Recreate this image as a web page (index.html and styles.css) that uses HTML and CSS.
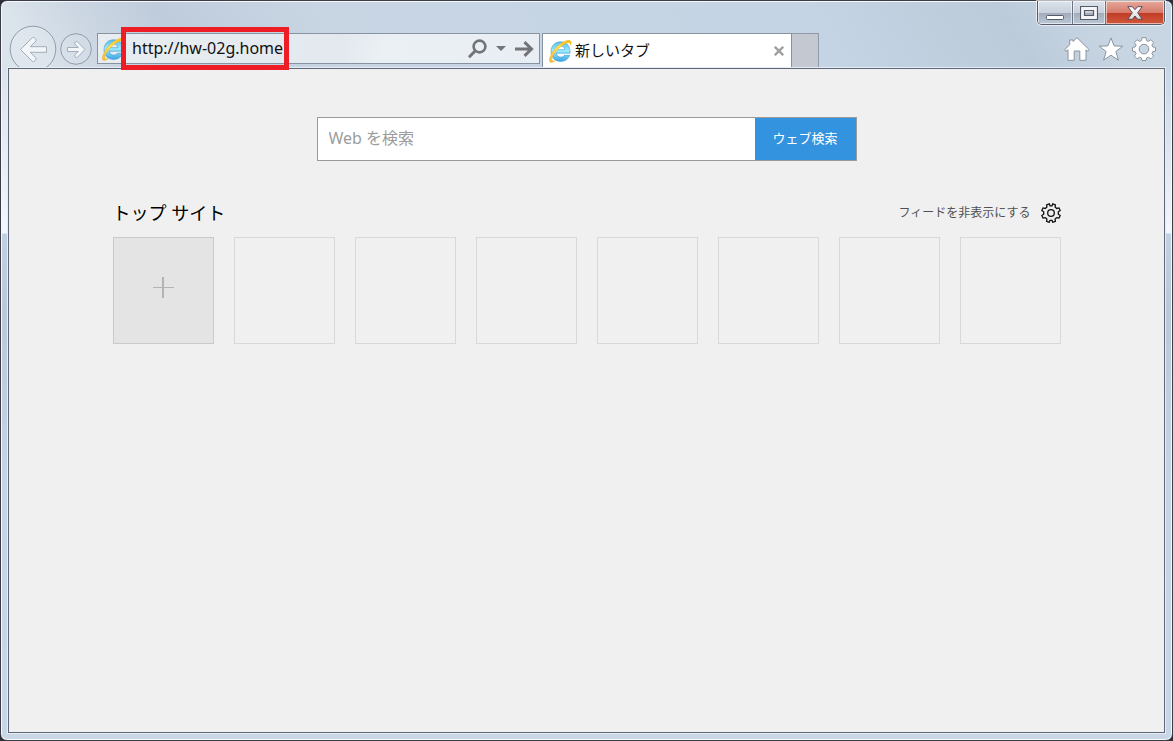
FILE: index.html
```html
<!DOCTYPE html>
<html lang="ja">
<head>
<meta charset="utf-8">
<meta name="viewport" content="width=device-width, initial-scale=1">
<title>新しいタブ</title>
<link rel="stylesheet" href="styles.css">
</head>
<body>
<svg class="defs" aria-hidden="true">
  <defs>
    <linearGradient id="ie-blue" x1="0" y1="0" x2="0" y2="1">
      <stop offset="0" stop-color="#5cbcec"/><stop offset=".45" stop-color="#9becff"/><stop offset="1" stop-color="#3aa4e2"/>
    </linearGradient>
    <linearGradient id="ie-gold" x1="0" y1="1" x2="1" y2="0">
      <stop offset="0" stop-color="#f7b73a"/><stop offset=".5" stop-color="#ffe04a"/><stop offset="1" stop-color="#f5bd14"/>
    </linearGradient>
    <linearGradient id="close-face" x1="0" y1="0" x2="0" y2="1">
      <stop offset="0" stop-color="#fff"/><stop offset="1" stop-color="#d8d8dc"/>
    </linearGradient>
    <symbol id="ie" viewBox="0 0 24 24">
      <path d="M12.600 2.800C6.800 2.800 3 7.100 3 12.700c0 5.700 4 9.700 9.700 9.700 4.300 0 7.700-2.300 9-6.100h-5.400c-.7 1.200-1.900 1.800-3.500 1.800-2.500 0-4.200-1.500-4.400-3.900h13.700C22.500 7.200 18.900 2.800 12.600 2.800zM8.500 10.700c.4-2.400 2-3.700 4.200-3.700s3.800 1.300 4.100 3.700z" fill="url(#ie-blue)" stroke="#3f9bd2" stroke-width=".6"/>
      <path d="M1.900 22.900C.3 20.500 3 13.600 8.700 8 14 2.800 20 .3 22.300 1.700c1.100.7 1.100 2.400.3 4.600-.1-1.600-.5-2.300-1.600-2.500-2.500-.5-7.300 2.500-11.200 6.500C5.800 14.400 3.100 19.200 3.900 21.100c.4.900 1.500 1.200 3.200.7-2.300 1.500-4.300 2.100-5.200 1.100z" fill="url(#ie-gold)" stroke="#f0b323" stroke-width=".5"/>
    </symbol>
  </defs>
</svg>

<div class="window">
  <div class="caption">
    <button class="caption-btn" aria-label="最小化">
      <svg width="18" height="6" viewBox="0 0 18 6"><rect x=".5" y=".5" width="17" height="4" rx="1" fill="#fff" stroke="#565a68"/></svg>
    </button>
    <button class="caption-btn" aria-label="最大化">
      <svg width="18" height="14" viewBox="0 0 18 14"><path d="M.5.5h17v13H.5zM4.500 4.500v5h9v-5z" fill="#f4f4f7" stroke="#565a68" stroke-width="1.200" fill-rule="evenodd"/></svg>
    </button>
    <button class="caption-btn caption-close" aria-label="閉じる">
      <svg width="16" height="14" viewBox="0 0 16 14"><path d="M.8.700h4.600L8 3.700l2.600-3h4.600L10.700 6.800l4.500 6.500h-4.600L8 10l-2.600 3.300H.8l4.500-6.500z" fill="url(#close-face)" stroke="#5a4a58"/></svg>
    </button>
  </div>

  <header class="toolbar">
    <button class="nav-btn back" aria-label="戻る">
      <svg width="48" height="48" viewBox="0 0 48 48"><circle cx="24" cy="24" r="22.800" fill="#ffffff22" stroke="#8f9cab"/><path d="M11.500 24.500 23.300 12.600c1.100-1.100 4.600 1.500 3.500 3.600L21.200 21.700H37.500v5.600H21.200l5.600 5.500c1.200 2-2.300 4.700-3.500 3.600z" fill="#f3f6f9" stroke="#a2adb9"/></svg>
    </button>
    <button class="nav-btn forward" aria-label="進む">
      <svg width="32" height="32" viewBox="0 0 32 32"><circle cx="16" cy="16" r="15.300" fill="#ffffff18" stroke="#8f9cab"/><path d="M25 16.500 17.300 8.600c-1.200-.8-3.300 1-2.500 2.500l3.500 3.400H7.500v4h10.800l-3.500 3.500c-.8 1.500 1.400 3.200 2.500 2.400z" fill="#f3f6f9" stroke="#a2adb9"/></svg>
    </button>
    <div class="address">
      <svg class="ie" aria-hidden="true"><use href="#ie"/></svg>
      <span class="url-wrap">
        <input class="url" type="text" aria-label="アドレス" value="http://hw-02g.home">
        <span class="highlight"></span>
      </span>
      <button class="bar-btn" aria-label="検索">
        <svg width="20" height="20" viewBox="0 0 20 20" fill="none" stroke="#737478"><circle cx="12.500" cy="7.500" r="5.900" stroke-width="2.600"/><path d="M8.300 11.800 2 18.200" stroke-width="3"/></svg>
      </button>
      <button class="bar-btn" aria-label="候補を表示">
        <svg width="10" height="5" viewBox="0 0 10 5"><path d="M0 0h10L5 5z" fill="#737478"/></svg>
      </button>
      <button class="bar-btn" aria-label="移動">
        <svg width="19" height="16" viewBox="0 0 19 16" fill="none" stroke="#737478" stroke-width="3"><path d="M0 8h16M9.500 1.200 16.500 8l-7 6.800"/></svg>
      </button>
    </div>
    <div class="tab">
      <svg class="ie" aria-hidden="true"><use href="#ie"/></svg>
      <span class="tab-title">新しいタブ</span>
      <button class="bar-btn" aria-label="タブを閉じる">
        <svg width="10" height="10" viewBox="0 0 10 10"><path d="m.8.800 8.400 8.400M9.200.800.8 9.200" stroke="#a0a0a0" stroke-width="2.400"/></svg>
      </button>
    </div>
    <button class="new-tab" aria-label="新しいタブを開く"></button>
    <div class="tools">
      <button class="bar-btn" aria-label="ホーム">
        <svg width="26" height="24" viewBox="0 0 26 24"><path d="M13 .7 9 4.500V3H5.700v4.700L.7 12.800l1.300 1.500L4 12.800V23.300h6.200V14h5.600v9.300H22V12.800l2 1.500 1.300-1.500z" fill="#fff" stroke="#8b949e"/></svg>
      </button>
      <button class="bar-btn" aria-label="お気に入り">
        <svg width="26" height="24" viewBox="0 0 26 24"><path d="m13 .9 3.100 8 8.700.3-6.900 5.300 2.500 8.600L13 18.200l-7.400 4.900 2.500-8.600-6.900-5.300 8.700-.3z" fill="#fff" stroke="#8b949e"/></svg>
      </button>
      <button class="bar-btn" aria-label="ツール">
        <svg width="24" height="24" viewBox="0 0 24 24"><path d="M10 .7h4l.6 3 1.700.7 2.600-1.700 2.700 2.800-1.700 2.500.8 1.900 2.800.5v3.700l-2.800.6-.8 1.900 1.700 2.500-2.700 2.700-2.600-1.600-1.700.7-.6 2.600h-4l-.6-2.600-1.700-.7-2.600 1.600-2.700-2.700 1.700-2.500-.8-1.900L.5 14.100v-3.700l2.800-.5.800-1.900-1.700-2.500 2.700-2.800 2.600 1.700 1.700-.7zM12 7.300a4.800 4.800 0 1 0 0 9.600 4.800 4.800 0 0 0 0-9.600z" fill="#fff" stroke="#8b949e" fill-rule="evenodd"/></svg>
      </button>
    </div>
  </header>

  <main class="page">
    <form class="search">
      <input class="search-input" type="text" aria-label="Web を検索" placeholder="Web を検索">
      <button class="search-btn" type="button">ウェブ検索</button>
    </form>
    <section class="top-sites">
      <div class="section-head">
        <h1 class="title">トップ サイト</h1>
        <a class="feed-link" href="#">フィードを非表示にする</a>
        <button class="bar-btn" aria-label="設定">
          <svg width="20" height="20" viewBox="0 0 20 20" fill="none" stroke="#111" stroke-width="1.300"><path d="M8.200.8 9 2.800h2L11.800.8l2.600 1-.3 2.200 1.600 1.500 2.300-.6 1.200 2.600-1.900 1.300v2.400l1.900 1.300-1.200 2.600-2.300-.5-1.600 1.500.3 2.200-2.600 1-.8-2H9l-.8 2-2.600-1 .3-2.200-1.600-1.500-2.300.5-1.200-2.600 1.900-1.300V8.800L.8 7.500 2 4.900l2.300.6L5.900 4l-.3-2.200z"/><circle cx="10" cy="10" r="3.300"/></svg>
        </button>
      </div>
      <div class="tiles">
        <button class="tile tile-add" aria-label="サイトを追加">
          <svg width="21" height="21" viewBox="0 0 21 21"><path d="M9 0h2v21H9zM0 10h21v1H0z" fill="#b4b4b4"/></svg>
        </button>
        <div class="tile"></div>
        <div class="tile"></div>
        <div class="tile"></div>
        <div class="tile"></div>
        <div class="tile"></div>
        <div class="tile"></div>
        <div class="tile"></div>
      </div>
    </section>
  </main>
</div>
</body>
</html>
```

FILE: styles.css
```css
* {
  box-sizing: border-box;
}

body {
  margin: 0;
  background: #2e2e38;
  font-family: "Noto Sans", "Noto Sans CJK JP", sans-serif;
}

button {
  padding: 0;
  border: 0;
  background: none;
  font: inherit;
}

svg {
  display: block;
}

.defs {
  position: absolute;
  width: 0;
  height: 0;
}

.window {
  position: relative;
  display: flex;
  flex-direction: column;
  min-height: 100vh;
  padding: 0 7px 7px;
  border: 1px solid #3c3c48;
  border-radius: 7px;
  background:
    linear-gradient(180deg, #dce5ee00 68px, #f4f7fb 232px, #c2d1e1 233px, #bac8d8 310px, #c6d5e5 480px, #c8d6e5),
    linear-gradient(60deg, #dbe3eb 0, #dbe3eb 370px, #ccd7e3 430px, #bfccdb 500px, #c3d0df 560px, #c8d6e4 640px, #c5d4e4 1060px, #bccbda 1230px, #c8d6e4 1320px);
  box-shadow: inset 0 0 0 1px #f6f9fc;
}

.caption {
  position: absolute;
  top: 0;
  right: 7px;
  display: flex;
  height: 24px;
  border: 1px solid #555b69;
  border-top: 0;
  border-radius: 0 0 5px 5px;
  overflow: hidden;
  box-shadow: 0 0 0 1px #ffffffa0;
}

.caption-btn {
  display: flex;
  width: 35px;
  align-items: center;
  justify-content: center;
  border-right: 1px solid #6c7483;
  background: linear-gradient(#dce3ec, #c8d0db 50%, #a0aab8 51%, #bbc8d7);
  box-shadow: inset 0 0 0 1px #ffffff90;
}

.caption-btn:first-child {
  padding-top: 10px;
}

.caption-btn:nth-child(2) {
  width: 33px;
}

.caption-close {
  width: 58px;
  border-right: 0;
  background: linear-gradient(#e5a99c, #d77b6b 50%, #c03b25 51%, #d1583b);
}

.toolbar {
  display: flex;
  height: 67px;
  padding: 24px 9px 0 1px;
}

.nav-btn {
  display: flex;
  align-items: flex-start;
  flex: none;
  height: 43px;
  overflow: hidden;
}

.forward {
  height: 32px;
  margin: 8px 5px 0 3px;
}

.address,
.tab {
  display: flex;
  align-items: center;
  border: 1px solid #8893a2;
}

.address {
  flex: 0 1 443px;
  height: 31px;
  margin: 8px 2px 0 0;
  padding: 0 5px 0 3px;
  gap: 9px;
  background: linear-gradient(100deg, #e8edf1, #e3e9ef 55%, #ebf0f4 65%, #e8eef4);
}

.ie {
  flex: none;
  width: 24px;
  height: 24px;
}

.address .ie {
  margin-right: -2px;
}

.url-wrap {
  position: relative;
  display: flex;
  flex: 1;
  min-width: 0;
}

.url {
  width: 100%;
  height: 26px;
  padding: 0 0 2px;
  border: 0;
  outline: 0;
  background: none;
  color: #111;
  font-family: "Noto Sans", sans-serif;
  font-size: 16px;
}

.highlight {
  position: absolute;
  top: -9px;
  left: -11px;
  width: 168px;
  height: 43px;
  border: 5px solid #ee1c25;
  pointer-events: none;
}

.bar-btn {
  flex: none;
}

.tab {
  flex: 0 1 250px;
  height: 35px;
  margin-top: 8px;
  padding: 0 7px 0 5px;
  gap: 3px;
  border-bottom: 0;
  background: #fff;
}

.tab-title {
  flex: 1;
  padding-bottom: 3px;
  color: #111;
  font-size: 15px;
  line-height: 24px;
  white-space: nowrap;
}

.new-tab {
  flex: none;
  width: 27px;
  height: 35px;
  margin-top: 8px;
  border: 1px solid #8f98a6;
  border-width: 1px 1px 0 0;
  background: #c4c8d1;
}

.tools {
  display: flex;
  align-items: flex-start;
  gap: 8px;
  margin: 12px 0 0 auto;
}

.page {
  flex: 1;
  padding: 48px 20px;
  border: 1px solid #5e6878;
  background: #f0f0f0;
  box-shadow: 0 0 0 1px #e6edf5;
}

.search {
  display: flex;
  max-width: 540px;
  height: 44px;
  margin: 0 auto;
  border: 1px solid #9b9b9b;
  background: #fff;
}

.search-input {
  flex: 1;
  min-width: 0;
  padding: 0 11px 2px;
  border: 0;
  outline: 0;
  background: none;
  font-family: inherit;
  font-size: 16px;
}

.search-input::placeholder {
  color: #9c9c9c;
  opacity: 1;
}

.search-btn {
  flex: none;
  width: 101px;
  padding-bottom: 3px;
  background: #3393df;
  color: #fff;
  font-size: 13px;
}

.top-sites {
  max-width: 948px;
  margin: 36px auto 0;
}

.section-head {
  display: flex;
  align-items: center;
  height: 32px;
  margin-bottom: 8px;
}

.title {
  flex: 1;
  margin: 0;
  padding-bottom: 2px;
  color: #000;
  font-size: 18px;
  font-weight: 400;
}

.feed-link {
  margin-right: 10px;
  padding-bottom: 2px;
  color: #505050;
  font-size: 12px;
  text-decoration: none;
}

.tiles {
  display: grid;
  grid-template-columns: repeat(8, 1fr);
  gap: 20px;
}

.tile {
  height: 107px;
  border: 1px solid #d8d8d8;
}

.tile-add {
  display: flex;
  align-items: center;
  justify-content: center;
  padding-bottom: 6px;
  border-color: #cacaca;
  background: #e4e4e4;
}
```
